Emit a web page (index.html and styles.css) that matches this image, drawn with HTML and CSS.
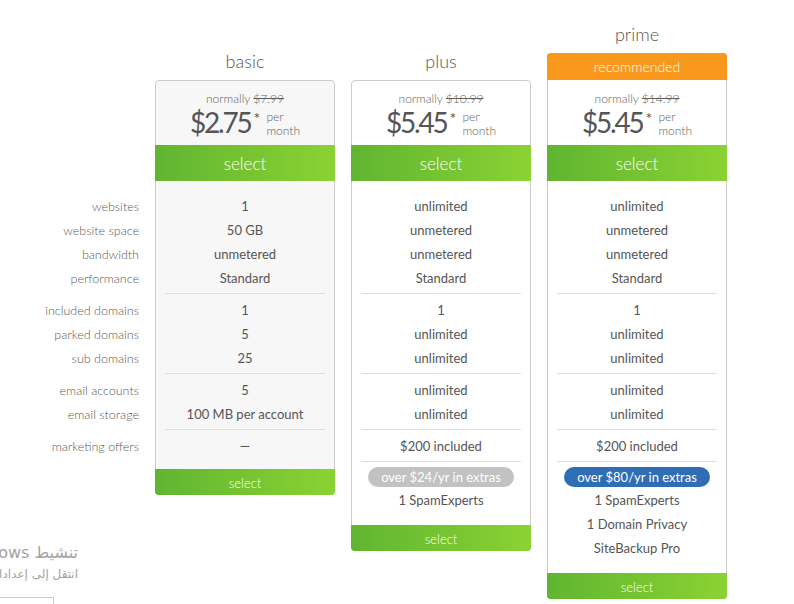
FILE: index.html
```html
<!DOCTYPE html>
<html lang="en">
<head>
<meta charset="utf-8">
<title>Plans</title>
<link rel="stylesheet" href="styles.css">
</head>
<body>
<div class="page">
  <div class="labels">
    <div class="group">
      <div class="row">websites</div>
      <div class="row">website space</div>
      <div class="row">bandwidth</div>
      <div class="row">performance</div>
    </div>
    <div class="group">
      <div class="row">included domains</div>
      <div class="row">parked domains</div>
      <div class="row">sub domains</div>
    </div>
    <div class="group">
      <div class="row">email accounts</div>
      <div class="row">email storage</div>
    </div>
    <div class="group">
      <div class="row">marketing offers</div>
    </div>
  </div>

  <div class="plan plan-offset">
    <div class="plan-title">basic</div>
    <div class="card card-grey">
      <div class="price-box">
        <div class="normally">normally <s>$7.99</s></div>
        <div class="price"><span class="amount">$2.75</span><span class="star">*</span><span class="per">per<br>month</span></div>
      </div>
      <div class="select select-lg">select</div>
      <div class="features features-short">
        <div class="group">
          <div class="row">1</div>
          <div class="row">50 GB</div>
          <div class="row">unmetered</div>
          <div class="row">Standard</div>
        </div>
        <div class="group">
          <div class="row">1</div>
          <div class="row">5</div>
          <div class="row">25</div>
        </div>
        <div class="group">
          <div class="row">5</div>
          <div class="row">100 MB per account</div>
        </div>
        <div class="group">
          <div class="row">—</div>
        </div>
      </div>
      <div class="select select-sm">select</div>
    </div>
  </div>

  <div class="plan plan-offset">
    <div class="plan-title">plus</div>
    <div class="card">
      <div class="price-box">
        <div class="normally">normally <s>$10.99</s></div>
        <div class="price"><span class="amount">$5.45</span><span class="star">*</span><span class="per">per<br>month</span></div>
      </div>
      <div class="select select-lg">select</div>
      <div class="features">
        <div class="group">
          <div class="row">unlimited</div>
          <div class="row">unmetered</div>
          <div class="row">unmetered</div>
          <div class="row">Standard</div>
        </div>
        <div class="group">
          <div class="row">1</div>
          <div class="row">unlimited</div>
          <div class="row">unlimited</div>
        </div>
        <div class="group">
          <div class="row">unlimited</div>
          <div class="row">unlimited</div>
        </div>
        <div class="group">
          <div class="row">$200 included</div>
        </div>
        <div class="group">
          <div class="badge-row"><span class="badge badge-grey">over $24/yr in extras</span></div>
          <div class="row">1 SpamExperts</div>
        </div>
      </div>
      <div class="select select-sm">select</div>
    </div>
  </div>

  <div class="plan">
    <div class="plan-title">prime</div>
    <div class="card card-featured">
      <div class="banner">recommended</div>
      <div class="price-box">
        <div class="normally">normally <s>$14.99</s></div>
        <div class="price"><span class="amount">$5.45</span><span class="star">*</span><span class="per">per<br>month</span></div>
      </div>
      <div class="select select-lg">select</div>
      <div class="features">
        <div class="group">
          <div class="row">unlimited</div>
          <div class="row">unmetered</div>
          <div class="row">unmetered</div>
          <div class="row">Standard</div>
        </div>
        <div class="group">
          <div class="row">1</div>
          <div class="row">unlimited</div>
          <div class="row">unlimited</div>
        </div>
        <div class="group">
          <div class="row">unlimited</div>
          <div class="row">unlimited</div>
        </div>
        <div class="group">
          <div class="row">$200 included</div>
        </div>
        <div class="group">
          <div class="badge-row"><span class="badge badge-blue">over $80/yr in extras</span></div>
          <div class="row">1 SpamExperts</div>
          <div class="row">1 Domain Privacy</div>
          <div class="row">SiteBackup Pro</div>
        </div>
      </div>
      <div class="select select-sm">select</div>
    </div>
  </div>
</div>

<div class="watermark" dir="rtl">
  <div class="wm-title">تنشيط Windows</div>
  <div class="wm-sub">انتقل إلى إعدادات لتنشيط Windows.</div>
</div>
<div class="wm-box"></div>
</body>
</html>
```

FILE: styles.css
```css
html, body {
  margin: 0;
  padding: 0;
  background: #ffffff;
}

body {
  font-family: Lato, "Open Sans", "Liberation Sans", sans-serif;
  color: #555555;
  overflow: hidden;
  height: 604px;
  position: relative;
}

.page {
  display: flex;
  align-items: flex-start;
  gap: 16px;
  padding-top: 21px;
}

/* label column */
.labels {
  width: 139px;
  margin-top: 174px;
  text-align: right;
  font-size: 12.5px;
  font-weight: 300;
  color: #5a5a5a;
}

.group {
  padding-bottom: 3px;
}

.group + .group {
  padding-top: 4px;
  border-top: 1px solid #dddddd;
}

.labels .group + .group {
  border-top-color: transparent;
}

.group:last-child {
  padding-bottom: 0;
}

.row {
  height: 24px;
  line-height: 24px;
  white-space: nowrap;
}

/* plans */
.plan {
  width: 180px;
  display: flex;
  flex-direction: column;
}

.plan-offset {
  margin-top: 27px;
}

.plan-title {
  height: 28px;
  line-height: 27px;
  margin-bottom: 4px;
  text-align: center;
  font-size: 18px;
  font-weight: 300;
  color: #555555;
}

.card {
  border: 1px solid #cccccc;
  border-radius: 4px;
  background: #ffffff;
  text-align: center;
}

.card-grey {
  background: #f7f7f7;
}

.card-featured {
  border-top: none;
}

.banner {
  margin: 0 -1px;
  height: 27px;
  line-height: 27px;
  background: #f8991d;
  color: #ffffff;
  font-size: 14px;
  font-weight: 300;
  border-radius: 4px 4px 0 0;
}

.price-box {
  height: 64px;
  padding-top: 10px;
  box-sizing: border-box;
}

.card-featured .price-box {
  height: 65px;
  padding-top: 11px;
}

.normally {
  font-size: 12px;
  line-height: 16px;
  color: #5f5f5f;
  font-weight: 300;
}

.normally s {
  color: #5f5f5f;
}

.price {
  display: flex;
  justify-content: center;
  align-items: flex-start;
}

.amount {
  font-size: 28px;
  line-height: 30px;
  color: #555555;
  letter-spacing: -2.2px;
}

.star {
  font-size: 16px;
  line-height: 16px;
  margin-left: 3px;
  margin-top: 3px;
}

.per {
  font-size: 12px;
  line-height: 14px;
  text-align: left;
  margin-left: 6px;
  margin-top: 3px;
  color: #5f5f5f;
  font-weight: 300;
}

.select {
  margin: 0 -1px;
  color: #ffffff;
  font-weight: 300;
  background: linear-gradient(to right, #60b531, #8bd233);
}

.select-lg {
  height: 36px;
  line-height: 37px;
  font-size: 17px;
}

.select-sm {
  height: 26px;
  line-height: 28px;
  font-size: 13px;
  margin-bottom: -1px;
  border-radius: 0 0 4px 4px;
}

.features {
  padding: 13px 0 13px;
  font-size: 13px;
  color: #555555;
}

.features-short {
  padding-bottom: 11px;
}

.features .group {
  margin: 0 9px;
}

.badge-row {
  height: 22px;
  display: flex;
  align-items: center;
  justify-content: center;
}

.badge {
  display: inline-block;
  width: 146px;
  height: 20px;
  line-height: 20px;
  border-radius: 10px;
  color: #ffffff;
  font-size: 13px;
}

.badge-grey {
  background: #c2c2c2;
}

.badge-blue {
  background: #2f6db5;
}

/* windows activation overlay */
.watermark {
  position: absolute;
  left: -222px;
  top: 542px;
  width: 300px;
  text-align: right;
  font-family: "DejaVu Sans", sans-serif;
  color: #a3a3a3;
  white-space: nowrap;
  overflow: hidden;
}

.wm-title {
  font-size: 16px;
  line-height: 22px;
}

.wm-sub {
  font-size: 12px;
  line-height: 20px;
}

.wm-box {
  position: absolute;
  left: -10px;
  top: 597px;
  width: 62px;
  height: 20px;
  border: 1px solid #cccccc;
  background: #ffffff;
}
```
